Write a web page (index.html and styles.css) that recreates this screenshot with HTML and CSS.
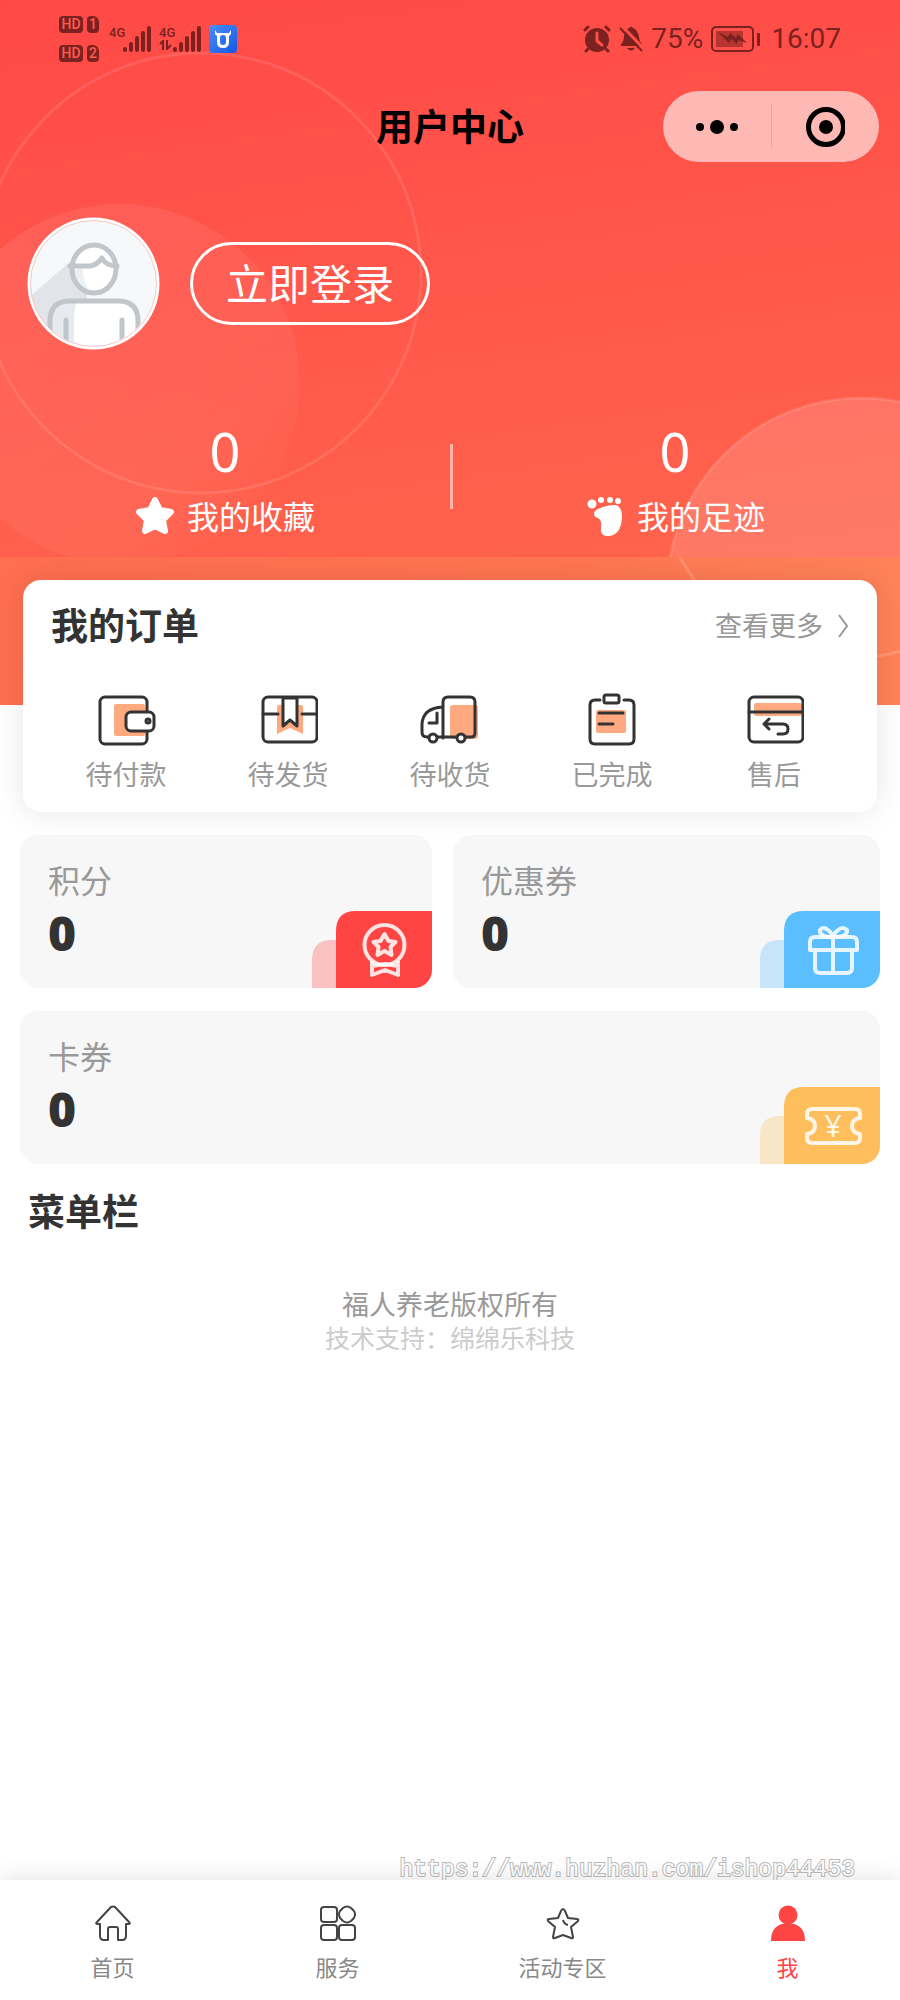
FILE: index.html
```html
<!DOCTYPE html>
<html lang="zh-CN">
<head>
    <meta charset="UTF-8">
    <meta name="viewport" content="width=device-width, initial-scale=1">
    <title>用户中心</title>
    <link rel="stylesheet" href="styles.css">
</head>
<body>
    <header class="head">
        <!-- background circles -->
        <svg class="head-bg" viewBox="0 0 900 705" preserveAspectRatio="xMidYMid slice" aria-hidden="true">
            <defs>
                <clipPath id="upper"><rect width="900" height="557"/></clipPath>
                <clipPath id="lower"><rect y="557" width="900" height="148"/></clipPath>
                <linearGradient id="disc" x1="0" y1="0" x2="1" y2="1">
                    <stop offset="0" stop-color="#fff" stop-opacity=".08"/>
                    <stop offset=".7" stop-color="#fff" stop-opacity=".05"/>
                    <stop offset=".9" stop-color="#fff" stop-opacity="0"/>
                </linearGradient>
            </defs>
            <circle cx="201" cy="273" r="220" fill="none" stroke="#fff" stroke-opacity=".11" stroke-width="3"/>
            <circle cx="120" cy="384" r="180" fill="url(#disc)" clip-path="url(#upper)"/>
            <circle cx="861" cy="592" r="194" fill="#fff" fill-opacity=".14" stroke="#fff" stroke-opacity=".12" stroke-width="3" clip-path="url(#upper)"/>
            <circle cx="850" cy="464" r="194" fill="#fff" fill-opacity=".02" stroke="#fff" stroke-opacity=".16" stroke-width="3" clip-path="url(#lower)"/>
        </svg>

        <div class="status">
            <div class="status-side">
                <div class="sims">
                    <span class="hd">HD</span><span class="sim">1</span>
                    <span class="hd">HD</span><span class="sim">2</span>
                </div>
                <div class="signal">
                    <span class="net">4G</span>
                    <svg width="28" height="26" viewBox="0 0 28 26" stroke="currentColor" stroke-width="4" stroke-linecap="round">
                        <path d="M2 23v1M8 18v6M14 12v12M20 7v17M26 2v22"/>
                    </svg>
                </div>
                <div class="signal">
                    <span class="net">4G
                        <svg width="13" height="10" viewBox="0 0 13 10" fill="none" stroke="currentColor" stroke-width="2">
                            <path d="M1 4l3-3v9M8 0v9l4-4"/>
                        </svg>
                    </span>
                    <svg width="28" height="26" viewBox="0 0 28 26" stroke="currentColor" stroke-width="4" stroke-linecap="round">
                        <path d="M2 23v1M8 18v6M14 12v12M20 7v17M26 2v22"/>
                    </svg>
                </div>
                <svg class="app-icon" width="28" height="28" viewBox="0 0 28 28">
                    <defs><linearGradient id="blue" x1="0" y1="0" x2="1" y2="1"><stop stop-color="#4a8ff5"/><stop offset="1" stop-color="#1458e8"/></linearGradient></defs>
                    <rect width="28" height="28" rx="4" fill="url(#blue)"/>
                    <path d="M6 5l2 3h12l2-3v4l-2 2v6q0 6-6 6t-6-6v-6l-2-2z" fill="#fff"/>
                    <rect x="11" y="10" width="6" height="10" rx="3" fill="#2f72ee"/>
                </svg>
            </div>
            <div class="status-side status-right">
                <svg width="28" height="28" viewBox="0 0 28 28" fill="none" stroke="currentColor" stroke-width="3" stroke-linecap="round">
                    <circle cx="14" cy="15" r="12" fill="currentColor" stroke="none"/>
                    <path d="M2 5l3-3M23 2l3 3M5 24l-2 2M23 24l2 2"/>
                    <path d="M14 8v8l5 4" stroke="#ff4f49"/>
                </svg>
                <svg width="26" height="28" viewBox="0 0 26 28">
                    <path d="M3 21v-2q3-3 3-8 0-6 5-8 2-3 4 0 5 2 6 9 0 4 3 7v2zM9 23h8q-4 5-8 0z" fill="currentColor"/>
                    <path d="M4 1l22 23" stroke="#ff4f49" stroke-width="3"/>
                    <path d="M2 3l22 23" stroke="currentColor" stroke-width="2"/>
                </svg>
                <span class="status-text">75%</span>
                <svg width="50" height="28" viewBox="0 0 50 28">
                    <rect x="2" y="2" width="41" height="24" rx="4" fill="none" stroke="currentColor" stroke-width="2"/>
                    <rect x="6" y="6" width="27" height="16" fill="currentColor" fill-opacity=".55"/>
                    <path d="M8 7l10 5 2-4 6 5 2-4 9 9-9-3-1 4-6-5-2 4z" fill="currentColor"/>
                    <rect x="47" y="8" width="3" height="13" rx="1" fill="currentColor"/>
                </svg>
                <span class="status-text status-time">16:07</span>
            </div>
        </div>

        <div class="nav">
            <h1 class="nav-title">用户中心</h1>
            <div class="capsule">
                <button type="button" class="capsule-btn" aria-label="更多">
                    <svg width="44" height="40" viewBox="0 0 44 40">
                        <circle cx="5" cy="20" r="4"/><circle cx="22" cy="20" r="7"/><circle cx="39" cy="20" r="4"/>
                    </svg>
                </button>
                <button type="button" class="capsule-btn" aria-label="关闭">
                    <svg width="40" height="40" viewBox="0 0 40 40">
                        <circle cx="21" cy="20" r="17.5" fill="none" stroke="#000" stroke-width="5"/><circle cx="21" cy="20" r="7"/>
                    </svg>
                </button>
            </div>
        </div>

        <div class="profile">
            <svg class="avatar" viewBox="0 0 133 133" role="img" aria-label="头像">
                <defs><clipPath id="face"><circle cx="66" cy="66" r="63"/></clipPath></defs>
                <circle cx="66.5" cy="66.5" r="66" fill="#fff"/>
                <g clip-path="url(#face)">
                    <rect width="133" height="133" fill="#f6f8fa"/>
                    <path d="M46 42L0 82v51h60V72z" fill="#e1e4e9"/>
                    <path d="M23 133v-29q0-20 20-20h48q20 0 20 20v29z" fill="#fff"/>
                    <path d="M23 133v-29q0-20 20-20h7q-3 8-3 20v29z" fill="#e7eaef"/>
                    <ellipse cx="67" cy="52" rx="22" ry="24" fill="#fff"/>
                    <path d="M46 52h10q0 14 8 24-16-4-18-24z" fill="#edf0f3"/>
                    <g fill="none" stroke="#c1c6cb" stroke-width="5" stroke-linecap="round" stroke-linejoin="round">
                        <ellipse cx="67" cy="52" rx="22" ry="24"/>
                        <path d="M43 49h20q7-1 12-8 4 8 15 8"/>
                        <path d="M23 136v-32q0-20 20-20h48q20 0 20 20v32"/>
                        <path d="M39 103v33M95 103v33"/>
                    </g>
                </g>
                <circle cx="66.5" cy="66.5" r="63" fill="none" stroke="#f7c9c4"/>
            </svg>
            <button type="button" class="login">立即登录</button>
        </div>

        <div class="stats">
            <a class="stat" href="#favorites">
                <span class="stat-num">0</span>
                <span class="stat-label">
                    <svg width="40" height="40" viewBox="0 0 40 40" fill="#fff" stroke="#fff" stroke-width="6" stroke-linejoin="round">
                        <path d="M20 3l5 10 11 2-8 8 2 11-10-5-10 5 2-11-8-8 11-2z"/>
                    </svg>
                    我的收藏
                </span>
            </a>
            <a class="stat" href="#footprints">
                <span class="stat-num">0</span>
                <span class="stat-label">
                    <svg width="40" height="40" viewBox="0 0 40 40" fill="#fff">
                        <circle cx="7" cy="7" r="4.5"/><circle cx="16" cy="3" r="3"/><circle cx="25" cy="3" r="3"/><circle cx="33" cy="4" r="3"/>
                        <path d="M13 12q8-4 18-4 6 2 6 12-1 19-14 19-8 0-7-8 1-8-3-10-4-1-4-4t4-5z"/>
                    </svg>
                    我的足迹
                </span>
            </a>
        </div>
    </header>

    <main class="main">
        <section class="orders">
            <div class="orders-head">
                <h2 class="title">我的订单</h2>
                <a class="more" href="#orders">查看更多
                    <svg width="12" height="24" viewBox="0 0 12 24" fill="none" stroke="#999" stroke-width="2"><path d="M2 1l8 11-8 11"/></svg>
                </a>
            </div>
            <nav class="order-list">
                <a class="order" href="#unpaid">
                    <svg width="60" height="56" viewBox="0 0 60 56">
                        <rect class="tint" x="18" y="12" width="31" height="32" rx="2"/>
                        <rect x="4" y="5" width="47" height="47" rx="5"/>
                        <rect x="30" y="20" width="28" height="19" rx="5" fill="#fff"/>
                        <circle cx="52" cy="29" r="2"/>
                    </svg>
                    待付款
                </a>
                <a class="order" href="#unshipped">
                    <svg width="60" height="56" viewBox="0 0 60 56">
                        <path class="tint" d="M21 13h22q2 0 2 2v27l-13-6-13 6V15q0-2 2-2z"/>
                        <rect x="5" y="5" width="54" height="45" rx="5"/>
                        <path d="M5 22h15M44 22h15"/>
                        <path d="M25 6h14v28l-7-6-7 6z" fill="#fff"/>
                    </svg>
                    待发货
                </a>
                <a class="order" href="#shipped">
                    <svg width="60" height="56" viewBox="0 0 60 56">
                        <rect class="tint" x="30" y="13" width="28" height="34" rx="3"/>
                        <path d="M23 46V10q0-5 5-5h22q5 0 5 5v31q0 4-4 4H7q-5 0-5-5V32Q3 16 23 15"/>
                        <path d="M17 21v10H9"/>
                        <circle cx="13" cy="46" r="4" fill="#fff"/><circle cx="41" cy="46" r="4" fill="#fff"/>
                    </svg>
                    待收货
                </a>
                <a class="order" href="#done">
                    <svg width="60" height="56" viewBox="0 0 60 56">
                        <rect class="tint" x="14" y="18" width="30" height="23" rx="2"/>
                        <path d="M18 8h-5q-5 0-5 5v34q0 5 5 5h34q5 0 5-5V13q0-5-5-5h-5"/>
                        <rect x="22" y="3" width="15" height="8" rx="2"/>
                        <path d="M17 21h24M17 32h14"/>
                    </svg>
                    已完成
                </a>
                <a class="order" href="#aftersale">
                    <svg width="60" height="56" viewBox="0 0 60 56">
                        <rect class="tint" x="10" y="11" width="48" height="13" rx="2"/>
                        <rect x="5" y="5" width="54" height="45" rx="5"/>
                        <path d="M5 20h54M25 27l-5 5 5 5M21 32h18q5 0 5 5t-5 5h-5"/>
                    </svg>
                    售后
                </a>
            </nav>
        </section>

        <section class="assets">
            <a class="asset" href="#points">
                <span class="asset-name">积分</span>
                <span class="asset-num">0</span>
                <svg class="badge red" width="120" height="77" viewBox="0 0 120 77">
                    <path class="badge-back" d="M0 77V49q0-20 20-20h4v48z"/>
                    <path class="badge-front" d="M24 77V20Q24 0 44 0h76v77z"/>
                    <g class="badge-icon">
                        <path d="M60 50v14l13-5 13 5V50M60 55l13-2 13 2"/>
                        <circle cx="72.5" cy="34" r="20"/>
                        <path d="M72.5 23l4 7 7 1-5 5 1 8-7-4-7 4 1-8-5-5 7-1z"/>
                    </g>
                </svg>
            </a>
            <a class="asset" href="#coupons">
                <span class="asset-name">优惠券</span>
                <span class="asset-num">0</span>
                <svg class="badge blue" width="120" height="77" viewBox="0 0 120 77">
                    <path class="badge-back" d="M0 77V49q0-20 20-20h4v48z"/>
                    <path class="badge-front" d="M24 77V20Q24 0 44 0h76v77z"/>
                    <g class="badge-icon">
                        <path d="M50 39V31q0-5 5-5h37q5 0 5 5v8zM55 39v18q0 5 5 5h27q5 0 5-5V39M73 26v36"/>
                        <path d="M73 26q-14 0-13-7 3-4 8 0 4 3 5 7 1-4 5-7 5-4 9 0 1 7-14 7"/>
                    </g>
                </svg>
            </a>
            <a class="asset asset-wide" href="#cards">
                <span class="asset-name">卡券</span>
                <span class="asset-num">0</span>
                <svg class="badge yellow" width="120" height="77" viewBox="0 0 120 77">
                    <path class="badge-back" d="M0 77V49q0-20 20-20h4v48z"/>
                    <path class="badge-front" d="M24 77V20Q24 0 44 0h76v77z"/>
                    <g class="badge-icon">
                        <path d="M52 22h43q5 0 5 5v4q-8 1-8 8t8 8v4q0 5-5 5H52q-5 0-5-5v-4q8-1 8-8t-8-8v-4q0-5 5-5z"/>
                    </g>
                    <text x="73" y="50" text-anchor="middle" class="yen">¥</text>
                </svg>
            </a>
        </section>

        <h2 class="title menu-title">菜单栏</h2>

        <div class="copyright">
            <p class="owner">福人养老版权所有</p>
            <p class="support">技术支持：绵绵乐科技</p>
        </div>

        <span class="site-mark">https://www.huzhan.com/ishop44453</span>
    </main>

    <nav class="tabbar">
        <a class="tab" href="#home">
            <svg width="36" height="36" viewBox="0 0 36 36">
                <path d="M16 2q2-1 4 0l14 15q2 2-1 2h-2v12q0 4-4 4h-4V24q0-2-2-2h-6q-2 0-2 2v11h-4q-4 0-4-4V19H3q-3 0-1-2z"/>
            </svg>
            首页
        </a>
        <a class="tab" href="#service">
            <svg width="36" height="36" viewBox="0 0 36 36">
                <rect x="1" y="2" width="16" height="15" rx="3"/>
                <rect x="1" y="20" width="16" height="15" rx="3"/>
                <rect x="19" y="20" width="16" height="15" rx="3"/>
                <path d="M23 3q4-3 8 0l3 3q2 3 0 7l-3 3q-4 3-8 0l-3-3q-2-4 0-7z"/>
            </svg>
            服务
        </a>
        <a class="tab" href="#activity">
            <svg width="36" height="36" viewBox="0 0 36 36">
                <path d="M18 4q1 0 2 2l3 7 9 1q2 0 1 2l-7 6 2 10q0 2-2 1l-8-3-8 3q-2 1-2-1l2-10-7-6q-1-2 1-2l9-1 3-7q1-2 2-2zM18 15q1 4 5 5"/>
            </svg>
            活动专区
        </a>
        <a class="tab active" href="#me" aria-current="page">
            <svg width="36" height="36" viewBox="0 0 36 36">
                <circle cx="18" cy="10" r="9.5"/>
                <path d="M1 36q0-14 11-17h12q11 3 11 17z"/>
            </svg>
            我
        </a>
    </nav>
</body>
</html>
```
FILE: styles.css
```css
* {
  box-sizing: border-box;
}

body {
  margin: 0;
  min-height: 100vh;
  display: flex;
  flex-direction: column;
  background: #fff;
  color: #333;
  font-family: "Noto Sans", "Noto Sans CJK SC", sans-serif;
}

a {
  color: inherit;
  text-decoration: none;
}

button {
  padding: 0;
  border: 0;
  background: none;
  font-family: inherit;
  cursor: pointer;
}

h1, h2, p {
  margin: 0;
}

svg {
  display: block;
  flex: none;
}

/* header */
.head {
  position: relative;
  padding-bottom: 168px;
  color: #fff;
  background:
    linear-gradient(100deg, #ff6e50, #ff7551 60%, #ff8156) 0 557px / 100% 148px no-repeat,
    linear-gradient(172deg, #ff4946 0%, #ff534a 30%, #ff624c 75%, #ff684e 100%);
}

.head-bg {
  position: absolute;
  top: 0;
  left: 0;
  width: 100%;
  height: 100%;
}

.status,
.nav,
.profile,
.stats {
  position: relative;
}

.status {
  height: 77px;
  padding: 0 59px;
  display: flex;
  justify-content: space-between;
  align-items: center;
  color: #7c211f;
  font-family: Roboto, sans-serif;
}

.status-side {
  display: flex;
  align-items: center;
  gap: 8px;
}

.status-right {
  gap: 7px;
}

.sims {
  display: grid;
  grid-template-columns: 24px 12px;
  gap: 12px 4px;
  margin-right: 2px;
}

.hd,
.sim {
  height: 17px;
  border-radius: 4px;
  background: #7c211f;
  color: #ff5a50;
  font-size: 14px;
  line-height: 17px;
  font-weight: 500;
  text-align: center;
}

.sim {
  border-top-right-radius: 6px;
}

.signal {
  display: flex;
}

.net {
  width: 14px;
  font-size: 13px;
  line-height: 14px;
  font-weight: 500;
}

.status-text {
  font-size: 28px;
  line-height: 32px;
}

.status-time {
  margin-left: 4px;
}

.nav {
  height: 99px;
  padding: 0 21px;
  display: grid;
  grid-template-columns: 1fr auto 1fr;
  align-items: center;
}

.nav-title {
  grid-column: 2;
  color: #000;
  font-size: 37px;
  line-height: 44px;
  font-weight: 700;
}

.capsule {
  justify-self: end;
  width: 216px;
  height: 71px;
  display: flex;
  align-items: center;
  border-radius: 36px;
  background: #ffb9b5;
}

.capsule-btn {
  flex: 1;
  height: 43px;
  display: flex;
  justify-content: center;
  align-items: center;
}

.capsule-btn + .capsule-btn {
  border-left: 1px solid #eda5a2;
}

.profile {
  padding: 41px 27px 0;
  display: flex;
  align-items: center;
  gap: 30px;
}

.avatar {
  width: 133px;
  height: 133px;
}

.login {
  padding: 0 33px;
  height: 83px;
  border: 3px solid #fff;
  border-radius: 42px;
  color: #fff;
  font-size: 42px;
  line-height: 60px;
}

.stats {
  padding-top: 74px;
  display: flex;
}

.stat {
  flex: 1;
  display: flex;
  flex-direction: column;
  align-items: center;
  gap: 19px;
}

.stat + .stat {
  background: linear-gradient(#ffb6aa, #ffb6aa) 0 20px / 3px 65px no-repeat;
}

.stat-num {
  font-size: 54px;
  line-height: 54px;
}

.stat-label {
  display: flex;
  align-items: center;
  gap: 12px;
  font-size: 32px;
  line-height: 40px;
}

/* content */
.main {
  position: relative;
  flex: 1;
}

.title {
  font-size: 37px;
  line-height: 44px;
  font-weight: 700;
}

.orders {
  margin: -125px 23px 0;
  padding: 24px 22px 21px;
  border-radius: 18px;
  background: #fff;
  box-shadow: 0 0 30px rgba(0, 0, 0, 0.1);
}

.orders-head {
  padding: 0 6px;
  display: flex;
  justify-content: space-between;
  align-items: center;
}

.more {
  display: flex;
  align-items: center;
  gap: 14px;
  color: #999;
  font-size: 27px;
  line-height: 32px;
}

.order-list {
  margin-top: 44px;
  display: flex;
}

.order {
  flex: 1;
  display: flex;
  flex-direction: column;
  align-items: center;
  gap: 11px;
  color: #999;
  font-size: 27px;
  line-height: 32px;
}

.order svg {
  fill: none;
  stroke: #333;
  stroke-width: 3px;
  stroke-linecap: round;
  stroke-linejoin: round;
}

.order .tint {
  fill: #ffa980;
  stroke: none;
}

.assets {
  margin: 23px 20px 0;
  display: grid;
  grid-template-columns: 412fr 427fr;
  gap: 23px 21px;
}

.asset {
  position: relative;
  min-height: 153px;
  padding: 26px 28px;
  display: flex;
  flex-direction: column;
  gap: 4px;
  border-radius: 18px;
  background: #f7f7f7;
  overflow: hidden;
}

.asset-wide {
  grid-column: 1 / -1;
}

.asset-name {
  color: #999;
  font-size: 32px;
  line-height: 40px;
}

.asset-num {
  font-family: "Open Sans", "Noto Sans", sans-serif;
  font-size: 48px;
  line-height: 56px;
  font-weight: 800;
}

.badge {
  position: absolute;
  right: 0;
  bottom: 0;
}

.red { color: #ff4544; }
.blue { color: #5bbeff; }
.yellow { color: #ffbe5c; }

.badge-front {
  fill: currentColor;
}

.badge-back {
  fill: currentColor;
  opacity: 0.3;
}

.badge-icon {
  fill: none;
  stroke: #fff;
  stroke-opacity: 0.85;
  stroke-width: 4px;
  stroke-linejoin: round;
}

.yen {
  fill: #fff;
  fill-opacity: 0.9;
  font-size: 30px;
}

.menu-title {
  margin: 26px 28px 0;
}

.copyright {
  margin-top: 54px;
  text-align: center;
}

.owner {
  color: #999;
  font-size: 27px;
  line-height: 34px;
}

.support {
  color: #ccc;
  font-size: 25px;
  line-height: 32px;
}

.site-mark {
  position: absolute;
  right: 45px;
  bottom: -4px;
  color: #fff;
  font-family: "Liberation Mono", monospace;
  font-size: 23px;
  line-height: 28px;
  paint-order: stroke fill;
  -webkit-text-stroke: 2px #bbb;
}

/* bottom tabs */
.tabbar {
  position: sticky;
  bottom: 0;
  padding: 25px 0 19px;
  display: flex;
  background: #fff;
  box-shadow: 0 0 24px rgba(0, 0, 0, 0.12);
}

.tab {
  flex: 1;
  display: flex;
  flex-direction: column;
  align-items: center;
  gap: 12px;
  color: #888;
  font-size: 22px;
  line-height: 28px;
}

.tab svg {
  fill: none;
  stroke: #444;
  stroke-width: 2px;
  stroke-linejoin: round;
}

.tab.active {
  color: #ff4544;
}

.tab.active svg {
  fill: #ff4544;
  stroke: none;
}
```
